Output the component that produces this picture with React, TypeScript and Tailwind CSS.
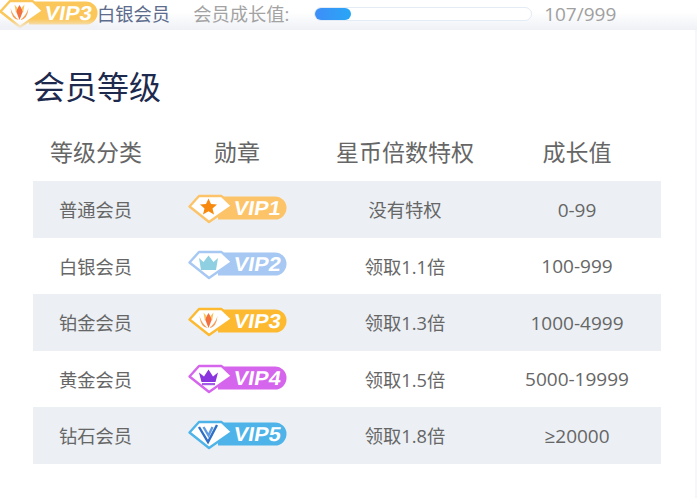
import React from "react";

const FONT = '"Open Sans", "Noto Sans CJK SC", sans-serif';

type BadgeProps = { level: number; color: string; icon: React.ReactNode };

function Badge({ level, color, icon }: BadgeProps) {
  return (
    <svg width="98" height="30" viewBox="0 0 98 30" className="block overflow-visible">
      <path d="M30 2.5H87a10.5 10.5 0 0 1 0 23H30z" fill={color} />
      <path d="M1.5 12.5 L11 2 H33.5 L44 12 L21 28 Z" fill="#fff" stroke={color} strokeWidth="2.4" strokeLinejoin="round" />
      {icon}
      <text
        x="45"
        y="21.5"
        fill="#fff"
        fontSize="20"
        fontWeight="700"
        fontFamily='"Liberation Sans", sans-serif'
        textLength="47"
        lengthAdjust="spacingAndGlyphs"
        transform="skewX(-10) translate(3.5 0)"
      >
        {`VIP${level}`}
      </text>
    </svg>
  );
}

const star = <path d="M20.5 4.5 L23 10 L29 10.6 L24.5 14.5 L26 20.5 L20.5 17.3 L15 20.5 L16.5 14.5 L12 10.6 L18 10 Z" fill="#f7890f" />;
const crown = <path d="M11 8 L15.5 12 L20.5 5.5 L25.5 12 L30 8 L28 20 H13 Z" fill="#8ed0e2" />;
const lotus = (
  <g>
    <path d="M11.5 9 Q14 17 20 21 Q12.5 21 11.5 9Z" fill="#f6a25b" />
    <path d="M29.5 9 Q27 17 21 21 Q28.5 21 29.5 9Z" fill="#f6a25b" />
    <path d="M20.5 6 L24 12 L20.5 21 L17 12Z" fill="#f2703f" />
    <path d="M15.5 5.5 L18.5 9 L17 14Z M25.5 5.5 L22.5 9 L24 14Z" fill="#fbc35c" />
  </g>
);
const purpleCrown = (
  <g>
    <path d="M11 8.5 L16 12.5 L20.5 5.5 L25 12.5 L30 8.5 L27.5 18 H13.5 Z" fill="#8a34e0" />
    <rect x="14" y="19" width="13" height="2.2" fill="#a35be8" />
  </g>
);
const vee = (
  <g fill="none" strokeWidth="2.4">
    <path d="M11 7 L20 22 L29 5" stroke="#2f6fc4" />
    <path d="M15.5 7 L20.5 15.5 L24.5 7" stroke="#5f9be0" />
  </g>
);

const COLS = "grid grid-cols-[126px_156px_180px_166px]";

const rows = [
  { name: "普通会员", level: 1, color: "#fdc368", icon: star, perk: "没有特权", range: "0-99", shade: true },
  { name: "白银会员", level: 2, color: "#a6c8f3", icon: crown, perk: "领取1.1倍", range: "100-999", shade: false },
  { name: "铂金会员", level: 3, color: "#fdb92f", icon: lotus, perk: "领取1.3倍", range: "1000-4999", shade: true },
  { name: "黄金会员", level: 4, color: "#d565ec", icon: purpleCrown, perk: "领取1.5倍", range: "5000-19999", shade: false },
  { name: "钻石会员", level: 5, color: "#4db3e8", icon: vee, perk: "领取1.8倍", range: "≥20000", shade: true },
];

export default function App() {
  return (
    <div className="w-[697px] h-[498px] overflow-hidden bg-[#f6f7fa]" style={{ fontFamily: FONT }}>
      <div className="relative h-[30px] flex items-center bg-gradient-to-b from-white from-40% to-[#eff1f6]">
        <div className="-mt-[3px] -ml-[1px] mr-[0px]">
          <Badge level={3} color="#fcc75a" icon={lotus} />
        </div>
        <span className="text-[18.3px] text-[#5d6c8c] leading-none -mt-[2px]">白银会员</span>
        <span className="ml-[23px] text-[18.3px] text-[#a3a3a3] leading-none -mt-[2px] w-[122px]">会员成长值:</span>
        <div className="-ml-[1px] w-[218px] h-[14px] rounded-full border border-[#e3ebf5] bg-white -mt-[3px]">
          <div className="w-[36px] h-full rounded-full bg-gradient-to-r from-[#3d8ef8] to-[#27a6f5]" />
        </div>
        <span className="ml-[12px] text-[19px] text-[#a0a0a0] leading-none -mt-[2px]">107/999</span>
        <div className="absolute left-0 top-[19px] w-[98px] h-[11px] bg-gradient-to-b from-transparent to-[#eff1f6]" />
      </div>
      <div className="mr-[2px] h-[468px] bg-white pl-[33px] pr-[34px]">
        <h1 className="pt-[33px] text-[32px] leading-[48px] font-normal text-[#1d2a4d]">会员等级</h1>
        <div className={`${COLS} h-[70px] pt-[12px] items-center text-center text-[23px] text-[#666]`}>
          <div>等级分类</div>
          <div>勋章</div>
          <div>星币倍数特权</div>
          <div className="-ml-[2px]">成长值</div>
        </div>
        {rows.map((r) => (
          <div
            key={r.level}
            className={`${COLS} h-[56.6px] items-center text-center text-[18.3px] text-[#666] ${r.shade ? "bg-[#ecf0f5]" : "bg-white"}`}
          >
            <div className="mt-[1px] -ml-[1px]">{r.name}</div>
            <div className="flex justify-center -mt-[1px] -ml-[1px]">
              <Badge level={r.level} color={r.color} icon={r.icon} />
            </div>
            <div className="mt-[1px]">{r.perk}</div>
            <div className="mt-[1px] -ml-[2px] text-[19px]">{r.range}</div>
          </div>
        ))}
      </div>
    </div>
  );
}
